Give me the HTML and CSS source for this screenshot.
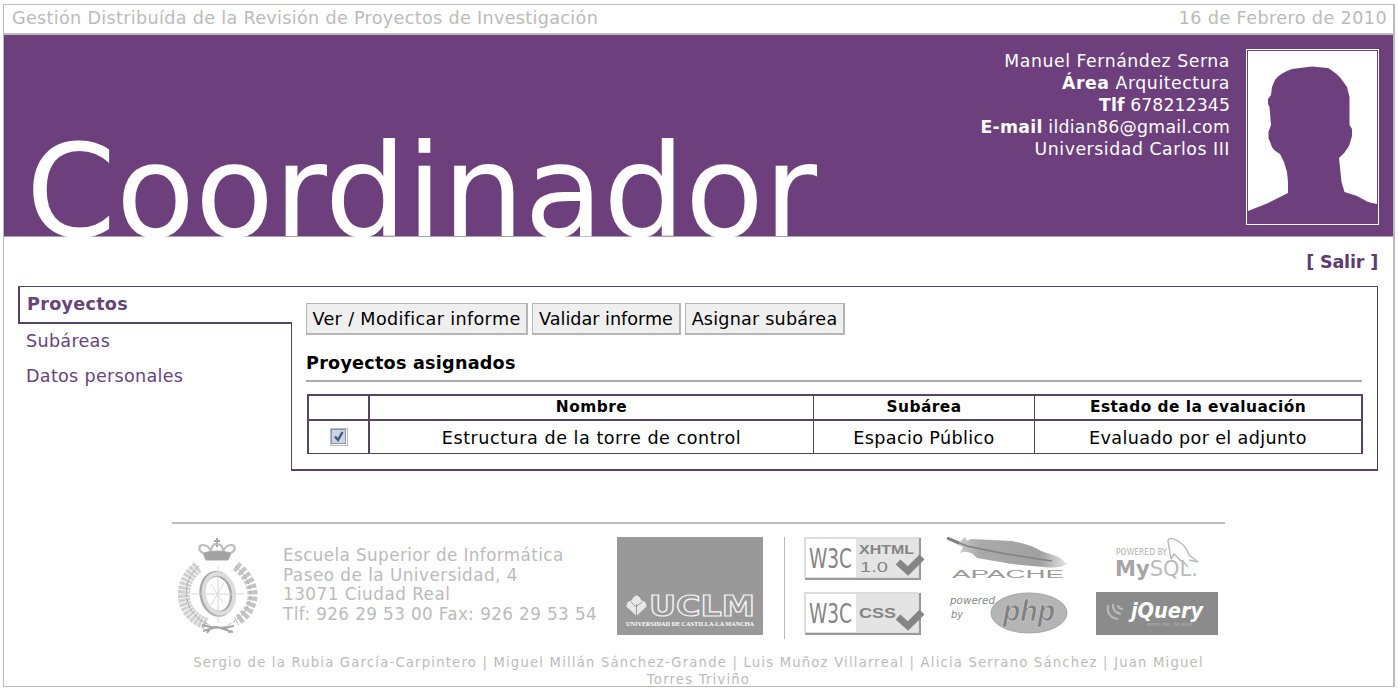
FILE: index.html
```html
<!DOCTYPE html>
<html lang="es">
<head>
<meta charset="utf-8">
<title>Coordinador</title>
<link rel="stylesheet" href="styles.css">
</head>
<body>
<div class="page">
  <div class="topbar"><span class="app-name">Gestión Distribuída de la Revisión de Proyectos de Investigación</span><span class="date">16 de Febrero de 2010</span></div>
  <header class="banner">
    <h1 class="role">Coordinador</h1>
    <div class="user">
      <div>Manuel Fernández Serna</div>
      <div><b>Área</b> Arquitectura</div>
      <div class="phone"><b>Tlf</b> 678212345</div>
      <div class="mail"><b>E-mail</b> ildian86@gmail.com</div>
      <div>Universidad Carlos III</div>
    </div>
    <svg class="photo" width="133" height="176" viewBox="0 0 133 176">
      <rect x=".5" y=".5" width="132" height="175" fill="none" stroke="#fff"/>
      <rect x="2" y="2" width="129" height="172" fill="#fff"/>
      <path fill="#6d3f7c" d="M2 162 21 154.500 42 144V133L41 123 38 113 34 105Q27 101 26 98L22.500 89V83L25 76 23.500 58 22 55V50L25 46 26 38 29 31Q34 24 46 20L66 17.500 82 19Q92 25 96 31L101 38 103.500 48 103.500 76 106 80V87L103 97Q99 104 93 109L95.500 133 98.500 143 111 147 122 153 131 155V174H2Z"/>
    </svg>
  </header>
  <div class="exit"><a>[ Salir ]</a></div>
  <div class="workspace">
    <nav class="menu">
      <div class="tab">Proyectos</div>
      <div class="links"><a>Subáreas</a><a>Datos personales</a></div>
    </nav>
    <main class="content">
      <div class="actions"><button class="b1">Ver / Modificar informe</button><button class="b2">Validar informe</button><button class="b3">Asignar subárea</button></div>
      <h2>Proyectos asignados</h2>
      <table>
        <colgroup><col class="c1"><col class="c2"><col class="c3"><col class="c4"></colgroup>
        <tr><th></th><th>Nombre</th><th>Subárea</th><th>Estado de la evaluación</th></tr>
        <tr><td><svg class="check" width="18" height="18" viewBox="0 0 18 18"><rect x=".5" y=".5" width="17" height="17" fill="#fff" stroke="#777" stroke-dasharray="1 1"/><rect x="1.500" y="1.500" width="14" height="14" fill="#c9d5e2" stroke="#8796a8"/><path d="M5 8.500 8 12 12.500 4" fill="none" stroke="#43577c" stroke-width="2.400"/></svg></td><td class="name">Estructura de la torre de control</td><td>Espacio Público</td><td>Evaluado por el adjunto</td></tr>
      </table>
    </main>
  </div>
  <footer class="footer">
    <div class="footer-row">
      <svg class="seal" width="84" height="100" viewBox="0 0 84 100">
        <g fill="none" stroke="#aaa">
          <path d="M41 1v9M38 4h6" stroke-width="2"/>
          <path d="M27 16C22 13 22 8 27 8s7 4 8 7c0-6 3-8 6-8s6 2 6 8c1-3 3-7 8-7s5 5 0 8" stroke="#bbb" stroke-width="2"/>
          <path d="M27 16 30 23H52L55 16Q41 12 27 16Z" fill="#a2a2a2"/>
          <path d="M22 30C1 46 3 78 31 87" stroke="#d0d0d0" stroke-width="12" stroke-dasharray="3 1"/>
          <path d="M23 29C2 47 8 79 34 88" stroke="#aaa" stroke-dasharray="5 1"/>
          <path d="M60 29C83 46 81 73 60 84" stroke="#c4c4c4" stroke-width="10" stroke-dasharray="4 2"/>
          <path d="M59 29C83 48 78 76 52 88" stroke="#aaa" stroke-dasharray="3 2"/>
          <ellipse cx="41.500" cy="57" rx="15" ry="20" transform="rotate(-10 41 57)" stroke="#aaa" stroke-width="6"/>
          <ellipse cx="43" cy="57" rx="15" ry="20" transform="rotate(-10 41 57)" stroke="#ddd" stroke-width="4"/>
          <path d="M42 29v57M15 57h53M35 47l12 19M48 46 35 68" stroke="#d8d8d8"/>
          <path d="M26 88Q42 93 58 89M27 94 41 90 57 95M31 96l4-5M50 91l4 5" stroke="#a5a5a5" stroke-width="2"/>
        </g>
      </svg>
      <div class="address"><div>Escuela Superior de Informática</div><div class="wide">Paseo de la Universidad, 4</div><div class="wide">13071 Ciudad Real</div><div>Tlf: 926 29 53 00 Fax: 926 29 53 54</div></div>
      <svg class="uclm" width="146" height="98" viewBox="0 0 146 98">
        <rect width="146" height="98" fill="#999"/>
        <path d="M19.500 58 30 69 19.500 79 9 69Z" fill="#e8e8e8"/>
        <g fill="#e8e8e8"><circle cx="14" cy="68" r="4"/><circle cx="25" cy="68" r="4"/><circle cx="19.500" cy="63" r="4"/></g>
        <path d="M19.500 67V79M14 65l5 5 6-5" stroke="#999" fill="none"/>
        <text x="32" y="79" textLength="106" lengthAdjust="spacingAndGlyphs" class="bold" font-size="28" fill="#999" stroke="#f4f4f4" stroke-width="1.200">UCLM</text>
        <text x="9" y="88.500" textLength="128" lengthAdjust="spacingAndGlyphs" class="serif" font-size="6.500" fill="#fff">UNIVERSIDAD DE CASTILLA-LA MANCHA</text>
      </svg>
      <div class="divider"></div>
      <div class="badges">
        <svg width="123" height="43" viewBox="0 0 123 43">
          <path d="M1 1H117V43H1Z" fill="#999"/><path d="M0 0H115V41H0Z" fill="#ddd"/><path d="M2 2H52V40H2Z" fill="#fff"/><path d="M52 2H114V40H52Z" fill="#e4e4e4"/>
          <text x="5" y="31" textLength="43" lengthAdjust="spacingAndGlyphs" class="sans" font-size="27" fill="#858585">W3C</text>
          <text x="55" y="17" textLength="55" lengthAdjust="spacingAndGlyphs" class="arial bold" font-size="13" fill="#858585">XHTML</text>
          <text x="56" y="35" textLength="28" lengthAdjust="spacingAndGlyphs" class="arial" font-size="15" fill="#858585">1.0</text>
          <path d="M94 25 104 34 118 20" fill="none" stroke="#858585" stroke-width="7"/>
        </svg>
        <svg width="123" height="43" viewBox="0 0 123 43">
          <path d="M1 1H117V43H1Z" fill="#999"/><path d="M0 0H115V41H0Z" fill="#ddd"/><path d="M2 2H52V40H2Z" fill="#fff"/><path d="M52 2H114V40H52Z" fill="#e4e4e4"/>
          <text x="5" y="31" textLength="43" lengthAdjust="spacingAndGlyphs" class="sans" font-size="27" fill="#858585">W3C</text>
          <text x="55" y="26" textLength="37" lengthAdjust="spacingAndGlyphs" class="arial bold" font-size="15" fill="#858585">CSS</text>
          <path d="M94 25 104 34 118 20" fill="none" stroke="#858585" stroke-width="7"/>
        </svg>
      </div>
      <div class="badges tools">
        <svg width="123" height="43" viewBox="0 0 123 43">
          <defs><linearGradient id="feather"><stop offset="0" stop-color="#ccc"/><stop offset=".2" stop-color="#aaa"/><stop offset=".75" stop-color="#a0a0a0"/><stop offset="1" stop-color="#e4e4e4"/></linearGradient></defs>
          <path d="M14 4 18 0 20 4 24 2 65 4Q85 8 94 14L112 20 120 27Q113 32 96 30L65 27 30 21Q22 12 13 16L16 10 10 8Z" fill="url(#feather)"/>
          <path d="M0 1 20 9Q60 18 105 24" fill="none" stroke="#808080" stroke-width="1.500"/>
          <path d="M0 1 12 6" stroke="#808080" stroke-width="3"/>
          <text x="5" y="41" textLength="112" lengthAdjust="spacingAndGlyphs" class="arial" font-size="10" fill="#999">APACHE</text>
        </svg>
        <svg width="123" height="43" viewBox="0 0 123 43">
          <text x="3" y="12" textLength="45" lengthAdjust="spacingAndGlyphs" class="sans italic" font-size="11" fill="#888">powered</text>
          <text x="4" y="26" textLength="12" lengthAdjust="spacingAndGlyphs" class="sans italic" font-size="11" fill="#888">by</text>
          <ellipse cx="82" cy="21" rx="38" ry="20" fill="#b5b5b5" stroke="#a5a5a5"/>
          <text x="56" y="29" textLength="52" lengthAdjust="spacingAndGlyphs" class="arial bold italic" font-size="30" fill="#808080" stroke="#d5d5d5" stroke-width=".6">php</text>
        </svg>
      </div>
      <div class="badges data">
        <svg width="122" height="43" viewBox="0 0 122 43">
          <text x="20" y="18" textLength="51" lengthAdjust="spacingAndGlyphs" class="sans" font-size="9" fill="#b0b0b0">POWERED BY</text>
          <path d="M75 22 72 4Q73-1 82 4 91 10 93 18L102 25 93 23M75 22 78 17 84 23Q87 24 92 30" fill="none" stroke="#bbb" stroke-width="1.500"/>
          <text x="19" y="39" textLength="83" lengthAdjust="spacingAndGlyphs" class="sans" font-size="21" fill="#bbb"><tspan class="bold" fill="#a5a5a5">My</tspan>SQL.</text>
        </svg>
        <svg width="122" height="43" viewBox="0 0 122 43">
          <rect width="122" height="43" fill="#8b8b8b"/>
          <g fill="none" stroke="#bbb" stroke-width="2"><path d="M12 13Q10 25 22 27"/><path d="M17 12Q16 20 25 22"/><path d="M22 13Q22 17 27 17"/></g>
          <text x="35" y="26" textLength="72" lengthAdjust="spacingAndGlyphs" class="sans bold italic" font-size="21" fill="#fff">jQuery</text>
          <text x="51" y="34" textLength="47" lengthAdjust="spacingAndGlyphs" class="sans" font-size="4" fill="#b5b5b5">WRITE LESS, DO MORE.</text>
        </svg>
      </div>
    </div>
    <div class="credits"><div>Sergio de la Rubia García-Carpintero | Miguel Millán Sánchez-Grande | Luis Muñoz Villarreal | Alicia Serrano Sánchez | Juan Miguel</div><div>Torres Triviño</div></div>
  </footer>
</div>
</body>
</html>
```
FILE: styles.css
```css
* { box-sizing: border-box; }
body { margin: 0; padding: 4px 3px 0; background: #fff; font-family: Verdana, "DejaVu Sans", sans-serif; font-size: 17.6px; color: #000; }
.page { width: 1392px; height: 683px; border: 1px solid #bbb; border-right-width: 2px; }
.topbar { display: flex; justify-content: space-between; height: 30px; padding: 0 6px 0 8px; border-bottom: 2px solid #bbb; color: #bbb; letter-spacing: .32px; line-height: 26px; white-space: nowrap; }
.date { letter-spacing: .4px; }
.banner { display: flex; height: 202px; padding-right: 14px; background: #6d3f7c; border-bottom: 1px solid #a9a0ad; color: #fff; }
.role { flex: 1; margin: 81px 0 0 22px; font-size: 129px; line-height: 150px; font-weight: normal; height: 120px; }
.user { margin: 15px 16px 0 0; text-align: right; font-size: 17.3px; letter-spacing: .56px; line-height: 22.1px; white-space: nowrap; }
.phone { letter-spacing: .1px; }
.mail { letter-spacing: .28px; }
.photo { margin-top: 14px; }
.exit { height: 49px; padding: 14px 15px 0; text-align: right; color: #5e3b70; font-weight: bold; letter-spacing: -.2px; line-height: 22px; }
.workspace { display: flex; height: 185px; margin: 0 15px 0 14px; }
.menu { display: flex; flex-direction: column; width: 274px; color: #67447a; letter-spacing: .28px; }
.tab { height: 38px; border: 2px solid #574460; border-top-width: 1px; border-right: 0; padding-left: 7px; line-height: 34px; font-weight: bold; }
.links { display: flex; flex-direction: column; flex: 1; padding-left: 8px; border-right: 1px solid #574460; line-height: 34.5px; }
.content { flex: 1; padding: 16px 14px 0 14px; border: 1px solid #574460; border-left: 0; border-bottom-width: 2px; }
.actions { display: flex; gap: 4px; }
button { height: 32px; padding: 0; border: 1px solid #b5b5b5; border-bottom-width: 2px; border-right-width: 2px; background: #efefef; color: #000; font-family: inherit; font-size: 17.6px; line-height: 28px; white-space: nowrap; }
.b1 { width: 222px; letter-spacing: .35px; }
.b2 { width: 149px; }
.b3 { width: 160px; letter-spacing: .2px; }
h2 { height: 47px; margin: 0 1px 12px 0; padding-top: 17px; border-bottom: 2px solid #aaa; font-size: 17.6px; letter-spacing: .24px; line-height: 22px; }
table { table-layout: fixed; width: 1056px; margin-left: 1px; border-spacing: 0; border: 2px solid #574460; border-width: 2px 0 0 2px; }
.c1 { width: 61px; }
.c2 { width: 444px; }
.c3 { width: 221px; }
.c4 { width: 328px; }
th, td { padding: 0; border: 0 solid #574460; border-right-width: 1px; text-align: center; }
th { height: 25px; border-bottom-width: 2px; font-size: 15.4px; letter-spacing: .46px; line-height: 23px; }
td { height: 33px; padding-top: 2px; border-bottom-width: 1px; letter-spacing: .36px; line-height: 30px; }
.name { letter-spacing: .52px; }
th:first-child, td:first-child, th:last-child, td:last-child { border-right-width: 2px; }
td:first-child { padding-top: 0; }
.check { display: block; margin: 0 auto; }
.footer { width: 1053px; margin: 51px 0 0 168px; border-top: 2px solid #bbb; color: #bbb; }
.footer-row { display: flex; height: 115px; padding: 13px 0 0 4px; }
.address { width: 334px; margin: 9px 0 0 23px; font-size: 16.8px; letter-spacing: .4px; line-height: 19.5px; white-space: nowrap; }
.wide { letter-spacing: .5px; }
.uclm { flex: none; }
.divider { width: 1px; height: 102px; margin: 0 19px 0 21px; background: #bbb; }
.badges { display: flex; flex-direction: column; gap: 12px; flex: none; }
.tools { margin-left: 20px; }
.data { margin-left: 26px; }
.credits { margin-top: 15px; text-align: center; font-size: 13.2px; letter-spacing: 1.2px; line-height: 17px; white-space: nowrap; }
.sans { font-family: "DejaVu Sans", sans-serif; }
.bold { font-family: "DejaVu Sans", sans-serif; font-weight: bold; }
.arial { font-family: "Liberation Sans", sans-serif; }
.serif { font-family: "Liberation Serif", serif; font-weight: bold; }
.italic { font-style: italic; }
```
